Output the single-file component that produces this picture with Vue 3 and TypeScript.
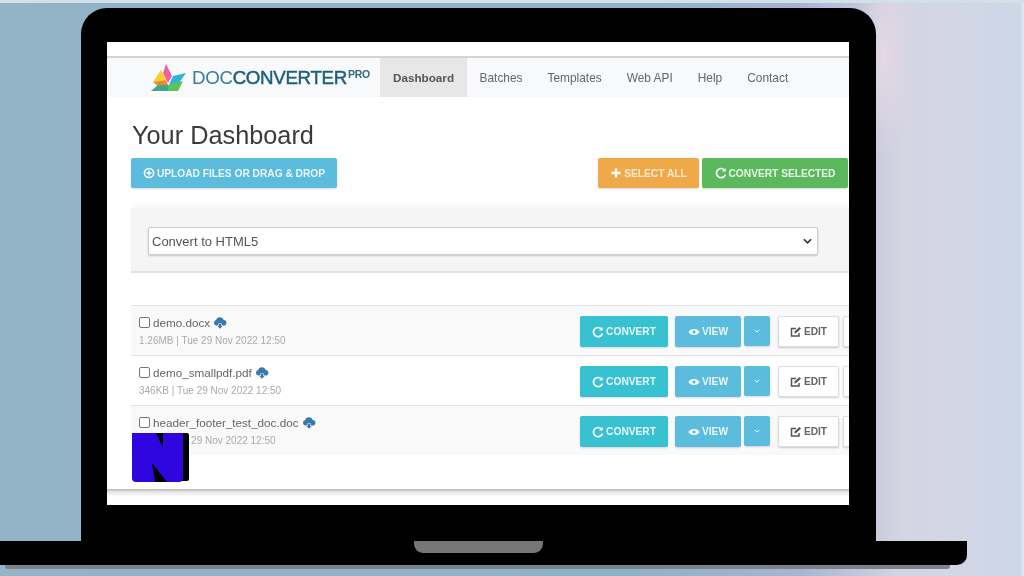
<script setup lang="ts">
interface Doc { name: string; meta: string }
const docs: Doc[] = [
  { name: 'demo.docx', meta: '1.26MB | Tue 29 Nov 2022 12:50' },
  { name: 'demo_smallpdf.pdf', meta: '346KB | Tue 29 Nov 2022 12:50' },
  { name: 'header_footer_test_doc.doc', meta: '82KB | Tue 29 Nov 2022 12:50' },
]
const navItems: string[] = ['Dashboard', 'Batches', 'Templates', 'Web API', 'Help', 'Contact']
</script>

<template>
  <div class="scene">
    <div class="lid">
      <div class="screen">
        <div class="page">
          <header class="nav">
            <div class="brand">
              <svg class="logo" viewBox="0 0 36 28" width="36" height="28">
                <polygon points="15,0 21,12 17,19 12,9" fill="#ee5f9c" />
                <polygon points="10,6 15,16 2,18" fill="#f5cf2a" />
                <polygon points="2,18 15,16 17,21 7,22" fill="#ef8a2c" />
                <polygon points="35,9 28,19 18,21 22,12" fill="#2fb4d6" />
                <polygon points="17,21 32,17 27,27 17,27" fill="#5cc25a" />
                <polygon points="0,27 7,21 17,21 17,27" fill="#3ba88e" />
              </svg>
              <span class="word"><span class="thin">DOC</span><span class="strong">CONVERTER</span><sup>PRO</sup></span>
            </div>
            <a v-for="(n, i) in navItems" :key="n" class="nav-item" :class="{ active: i === 0 }">{{ n }}</a>
          </header>

          <main class="content">
            <h1>Your Dashboard</h1>
            <div class="toolbar">
              <button class="btn info wide">
                <svg class="ic" viewBox="0 0 12 12"><circle cx="6" cy="6" r="4.6" fill="none" stroke="#fff" stroke-width="1.5" /><path d="M6 3.4v5.2M3.4 6h5.2" stroke="#fff" stroke-width="1.4" /></svg>
                UPLOAD FILES OR DRAG &amp; DROP
              </button>
              <div class="right">
                <button class="btn warn">
                  <svg class="ic" viewBox="0 0 12 12"><path d="M6 1.5v9M1.5 6h9" stroke="#fff" stroke-width="2.4" /></svg>
                  SELECT ALL
                </button>
                <button class="btn ok">
                  <svg class="ic" viewBox="0 0 12 12"><path d="M9.8 3.4A4.6 4.6 0 1 0 10.4 7.6" fill="none" stroke="#fff" stroke-width="1.7" /><path d="M10.6 1v3.6H7z" fill="#fff" /></svg>
                  CONVERT SELECTED
                </button>
              </div>
            </div>

            <section class="well">
              <div class="select">
                <span>Convert to HTML5</span>
                <svg viewBox="0 0 10 6" width="9" height="6"><path d="M1 1l4 4 4-4" fill="none" stroke="#333" stroke-width="1.8" /></svg>
              </div>
            </section>

            <section class="table">
              <div v-for="d in docs" :key="d.name" class="row">
                <div class="file">
                  <div class="name">
                    <span class="check"></span>
                    <span>{{ d.name }}</span>
                    <svg class="cloud" viewBox="0 0 14 12" width="14" height="12">
                      <path d="M3.4 8.6a2.8 2.8 0 0 1-.3-5.5A3.9 3.9 0 0 1 10.6 3a2.8 2.8 0 0 1 0 5.6z" fill="#3878b0" />
                      <path d="M5.5 6.5h3V9H10l-3 3-3-3h1.5z" fill="#3878b0" stroke="#fff" stroke-width=".5" />
                    </svg>
                  </div>
                  <div class="meta">{{ d.meta }}</div>
                </div>
                <div class="actions">
                  <button class="btn teal conv">
                    <svg class="ic" viewBox="0 0 12 12"><path d="M9.8 3.4A4.6 4.6 0 1 0 10.4 7.6" fill="none" stroke="#fff" stroke-width="1.7" /><path d="M10.6 1v3.6H7z" fill="#fff" /></svg>
                    CONVERT
                  </button>
                  <button class="btn info view">
                    <svg class="ic" viewBox="0 0 14 10"><path d="M0.5 5C3 0.5 11 0.5 13.5 5C11 9.5 3 9.5 0.5 5z" fill="#fff" /><circle cx="7" cy="5" r="1.9" fill="#5bbcdd" /></svg>
                    VIEW
                  </button>
                  <button class="btn info caret">
                    <svg viewBox="0 0 8 5" width="6" height="4"><path d="M1 1l3 3 3-3" fill="none" stroke="#fff" stroke-width="1.3" /></svg>
                  </button>
                  <button class="btn plain edit">
                    <svg class="ic" viewBox="0 0 12 12"><path d="M9 7v3H1.5V2.5H6" fill="none" stroke="#555" stroke-width="1.5" /><path d="M4.5 5.5L9.5 1l1.5 1.5-5 4.8H4.5z" fill="#555" /></svg>
                    EDIT
                  </button>
                  <button class="btn plain more"></button>
                </div>
              </div>
            </section>
          </main>
          <div class="page-end"></div>
        </div>
        <svg class="badge" viewBox="0 0 57 49" width="57" height="49" aria-hidden="true">
          <rect x="6" y="0" width="51" height="48" rx="2" fill="#000" />
          <path d="M0 0H51V45a4 4 0 0 1-4 4H4a4 4 0 0 1-4-4z" fill="#3006e0" />
          <polygon points="24,0 31,0 31,15" fill="#000" />
          <polygon points="20,30 35,49 23,49" fill="#000" />
        </svg>
      </div>
    </div>
    <div class="base"><div class="notch"></div></div>
    <div class="base-shadow"></div>
  </div>
</template>

<style>
html, body { margin: 0; padding: 0; }
</style>

<style scoped>
.scene {
  width: 1024px;
  height: 576px;
  box-sizing: border-box;
  padding-top: 8px;
  overflow: hidden;
  font-family: "Liberation Sans", Arial, sans-serif;
  background:
    linear-gradient(180deg, #d3e0e8 0 3px, transparent 3px),
    linear-gradient(90deg, transparent 0 1021px, #dde6f1 1022px),
    radial-gradient(ellipse 26px 100px at 884px 55px, rgba(232, 218, 228, 0.9) 0%, rgba(232, 218, 228, 0) 100%),
    linear-gradient(90deg, #93b3c7 0%, #8fb1c6 62%, #a6b4d2 78%, #d5d4e3 88%, #d3d6e5 92%, #ccd7e8 100%);
}
.lid {
  width: 795px;
  height: 533px;
  margin-left: 81px;
  box-sizing: border-box;
  padding: 34px 27px 36px 26px;
  background: #000;
  border-radius: 26px 26px 0 0;
}
.screen {
  position: relative;
  width: 742px;
  height: 463px;
  overflow: hidden;
  background: #fff;
}
.page {
  display: flex;
  flex-direction: column;
  height: 100%;
  padding-top: 14px;
  box-sizing: border-box;
  filter: blur(0.45px);
}
.nav {
  display: flex;
  align-items: stretch;
  height: 39px;
  flex: none;
  border-top: 2px solid #d4d4d4;
  background: #f7f9fa;
}
.brand {
  width: 273px;
  box-sizing: border-box;
  padding-left: 44px;
  display: flex;
  align-items: center;
  gap: 5px;
}
.logo { flex: none; }
.word {
  font-size: 18.7px;
  letter-spacing: -0.3px;
  color: #2c6a86;
  white-space: nowrap;
  display: flex;
  align-items: flex-start;
}
.thin { color: #3f7d98; font-weight: 400; }
.strong { color: #1f5f7c; font-weight: 400; -webkit-text-stroke: 0.5px #1f5f7c; }
.word sup { font-size: 10.5px; font-weight: 700; line-height: 1; margin-left: 1px; margin-top: 2px; letter-spacing: -0.3px; }
.nav-item {
  display: flex;
  align-items: center;
  padding: 0 12.5px;
  font-size: 11.9px;
  color: #666;
  white-space: nowrap;
}
.nav-item.active { background: #e7e7e7; color: #555; font-weight: 700; font-size: 11.7px; padding: 0 13px; }
.content {
  flex: 1;
  padding-left: 24px;
  width: 760px;
  box-sizing: border-box;
}
h1 {
  margin: 23px 0 8px 1px;
  font-size: 25.3px;
  line-height: 30px;
  font-weight: 400;
  color: #3a3a3a;
}
.toolbar {
  display: flex;
  justify-content: space-between;
  width: 717px;
  height: 30px;
}
.right { display: flex; gap: 3px; }
.btn {
  display: inline-flex;
  align-items: center;
  justify-content: center;
  gap: 2px;
  border: 0;
  border-radius: 2px;
  padding: 0;
  font-family: inherit;
  font-size: 10.2px;
  font-weight: 700;
  color: #e9f6fa;
  white-space: nowrap;
  box-shadow: 0 1px 2px rgba(0, 0, 0, 0.15);
}
.ic { width: 12px; height: 12px; flex: none; }
.info { background: #5bbcdd; }
.wide { width: 206px; }
.warn { background: #efa949; width: 101px; color: #fbe9cf; }
.ok { background: #5cb85c; width: 146px; color: #e6f5e6; }
.teal { background: #38c1d1; }
.well {
  margin-top: 20px;
  height: 65px;
  box-sizing: border-box;
  padding: 19px 0 0 17px;
  background: #f5f5f5;
  border-bottom: 2px solid #e3e3e3;
  box-shadow: 0 -6px 6px -2px #f8f8f8;
}
.select {
  width: 670px;
  height: 28px;
  box-sizing: border-box;
  padding: 0 5px 0 3px;
  display: flex;
  align-items: center;
  justify-content: space-between;
  background: #fff;
  border: 1px solid #ccc;
  border-radius: 2px;
  box-shadow: 0 1px 2px rgba(0, 0, 0, 0.2);
  font-size: 13px;
  color: #555;
}
.table { margin-top: 32px; }
.row {
  display: flex;
  align-items: flex-start;
  height: 50px;
  box-sizing: border-box;
  border-top: 1px solid #e2e2e2;
}
.row:nth-child(odd) { background: #f9f9f9; }
.file { width: 449px; flex: none; box-sizing: border-box; padding: 9px 0 0 8px; }
.name { display: flex; align-items: center; gap: 2px; font-size: 11.7px; line-height: 15px; color: #666; }
.check {
  width: 9px;
  height: 9px;
  border: 1px solid #777;
  border-radius: 2px;
  background: #fff;
  margin-right: 1px;
}
.cloud { margin-left: 1px; }
.meta { margin-top: 4px; font-size: 10px; line-height: 13px; color: #aaa; }
.actions { display: flex; padding-top: 10px; height: 31px; }
.conv { width: 88px; height: 31px; }
.view { width: 66px; height: 31px; margin-left: 7px; }
.caret { width: 26px; height: 30px; margin-left: 3px; }
.plain { background: #fff; border: 1px solid #ddd; color: #666; box-sizing: border-box; height: 31px; box-shadow: 0 1px 2px rgba(0, 0, 0, 0.2); }
.edit { width: 61px; margin-left: 8px; }
.more { width: 30px; margin-left: 4px; }
.page-end {
  flex: none;
  height: 16px;
  background: linear-gradient(180deg, #b5b5b5 0, #e9e9e9 3px, #fff 8px);
}
.badge { position: absolute; left: 25px; top: 391px; }
.base {
  width: 967px;
  height: 24px;
  box-sizing: border-box;
  padding-left: 414px;
  background: #000;
  border-radius: 0 0 10px 0;
}
.notch {
  width: 129px;
  height: 12px;
  background: #777;
  border-radius: 0 0 9px 9px;
}
.base-shadow {
  width: 945px;
  height: 4px;
  margin-left: 5px;
  background: #7c8488;
  border-radius: 0 0 3px 3px;
}
</style>
